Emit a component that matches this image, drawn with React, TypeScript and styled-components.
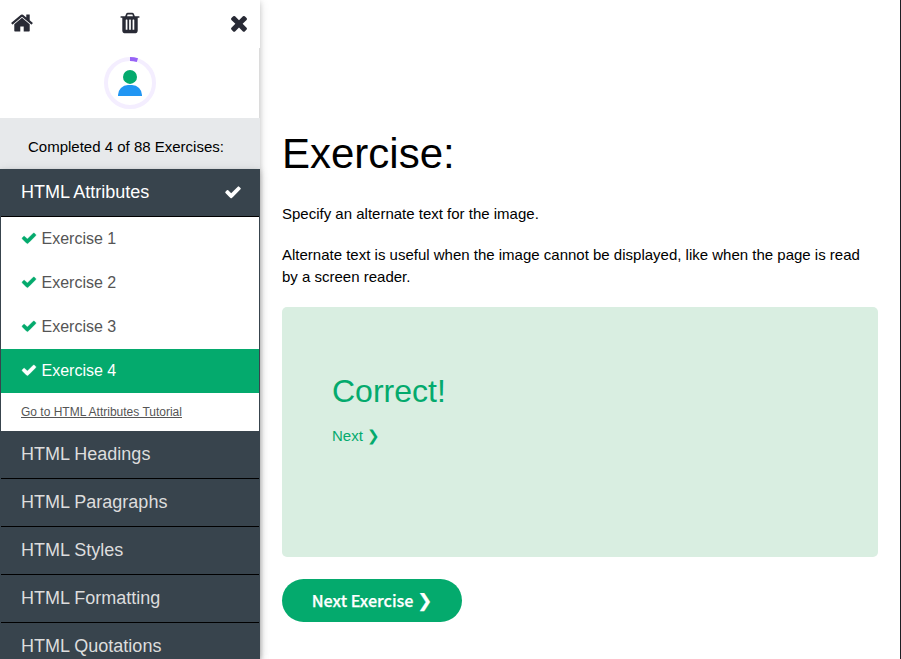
import React from "react";
import styled, { createGlobalStyle } from "styled-components";

const GlobalStyle = createGlobalStyle`
  * { box-sizing: border-box; }
  html, body { margin: 0; padding: 0; }
  body {
    font-family: "Liberation Sans", Arial, sans-serif;
    font-size: 15px;
    line-height: 22.5px;
    color: #000;
    background: #fff;
  }
`;

const paths = {
  home: "M1472 992v480q0 26-19 45t-45 19h-384v-384h-256v384h-384q-26 0-45-19t-19-45v-480q0-1 .5-3t.5-3l575-474 575 474q1 2 1 6zm223-69l-62 74q-8 9-21 11h-3q-13 0-21-7l-692-577-692 577q-12 8-24 7-13-2-21-11l-62-74q-8-10-7-23.5t11-21.5l719-599q32-26 76-26t76 26l244 204v-195q0-14 9-23t23-9h192q14 0 23 9t9 23v408l219 182q10 8 11 21.5t-7 23.5z",
  trash:
    "M704 1376v-704q0-14-9-23t-23-9h-64q-14 0-23 9t-9 23v704q0 14 9 23t23 9h64q14 0 23-9t9-23zm256 0v-704q0-14-9-23t-23-9h-64q-14 0-23 9t-9 23v704q0 14 9 23t23 9h64q14 0 23-9t9-23zm256 0v-704q0-14-9-23t-23-9h-64q-14 0-23 9t-9 23v704q0 14 9 23t23 9h64q14 0 23-9t9-23zm-544-992h448l-48-117q-7-9-17-11h-317q-10 2-17 11zm928 32v64q0 14-9 23t-23 9h-96v948q0 83-47 143.5t-113 60.5h-832q-66 0-113-58.5t-47-141.5v-952h-96q-14 0-23-9t-9-23v-64q0-14 9-23t23-9h309l70-167q15-37 54-63t79-26h320q40 0 79 26t54 63l70 167h309q14 0 23 9t9 23z",
  times:
    "M1490 1322q0 40-28 68l-136 136q-28 28-68 28t-68-28l-294-294-294 294q-28 28-68 28t-68-28l-136-136q-28-28-28-68t28-68l294-294-294-294q-28-28-28-68t28-68l136-136q28-28 68-28t68 28l294 294 294-294q28-28 68-28t68 28l136 136q28 28 28 68t-28 68l-294 294 294 294q28 28 28 68z",
  check:
    "M1671 566q0 40-28 68l-724 724-136 136q-28 28-68 28t-68-28l-136-136-362-362q-28-28-28-68t28-68l136-136q28-28 68-28t68 28l294 295 656-657q28-28 68-28t68 28l136 136q28 28 28 68z",
};

const Glyph = styled.svg`
  display: block;
  flex: none;
  fill: currentColor;
`;

function Icon({ name, size }: { name: keyof typeof paths; size: number }) {
  return (
    <Glyph width={size} height={size} viewBox="0 0 1792 1792" aria-hidden="true">
      <path d={paths[name]} />
    </Glyph>
  );
}

const Page = styled.div`
  display: flex;
  height: 659px;
  overflow: hidden;
  border-right: 1px solid #1d1e24;
`;

const Sidebar = styled.aside`
  position: relative;
  flex: none;
  display: flex;
  flex-direction: column;
  width: 260px;
  background: #fff;
  box-shadow: 0 2px 5px rgba(0, 0, 0, 0.16), 0 2px 10px rgba(0, 0, 0, 0.12);
`;

const Toolbar = styled.div`
  display: flex;
  justify-content: space-between;
  height: 48px;
  padding: 11px 9.5px 0 10px;
  color: #282a35;
`;

const ToolButton = styled.button`
  display: block;
  height: 24px;
  padding: 0;
  border: 0;
  background: none;
  color: inherit;
`;

const Profile = styled.div`
  display: flex;
  justify-content: center;
  height: 70px;
  padding-top: 9px;
  border-right: 1px solid #dcdcdc;

  svg {
    margin-left: 1px;
  }
`;

const Progress = styled.div`
  height: 51px;
  padding: 18px 0 0 28px;
  background: #e7e9eb;
`;

const Menu = styled.nav`
  flex: 1;
  min-height: 0;
  background: #38444d;
  border: solid #38444d;
  border-width: 0 1px;
  box-shadow: 0 2px 5px rgba(0, 0, 0, 0.16), 0 2px 10px rgba(0, 0, 0, 0.12);
`;

const Section = styled.div<{ $open?: boolean }>`
  display: flex;
  align-items: center;
  justify-content: space-between;
  height: 48px;
  padding: 0 17px 0 20px;
  border-bottom: 1px solid #000;
  color: ${(p) => (p.$open ? "#fff" : "#ddd")};
  font-size: 18px;
  line-height: 27px;

  svg {
    margin-bottom: 1px;
  }
`;

const Exercises = styled.div`
  height: 214px;
  background: #fff;
`;

const Exercise = styled.div<{ $active?: boolean }>`
  display: flex;
  align-items: center;
  gap: 4.5px;
  height: 44px;
  padding-left: 20px;
  background: ${(p) => (p.$active ? "#04aa6d" : "#fff")};
  color: ${(p) => (p.$active ? "#fff" : "#555")};
  font-size: 16px;
  line-height: 24px;

  svg {
    margin-bottom: 2px;
    color: ${(p) => (p.$active ? "#fff" : "#04aa6d")};
    stroke: currentColor;
    stroke-width: 40px;
  }
`;

const TutorialLink = styled.a`
  display: block;
  padding: 10px 20px;
  color: #555;
  font-size: 12px;
  line-height: 18px;
  text-decoration: underline;
`;

const Main = styled.main`
  flex: 1;
  min-width: 0;
  padding: 122px 22px 0;
`;

const Title = styled.h1`
  margin: 0 0 18px;
  font-size: 42px;
  line-height: 63px;
  font-weight: 400;
`;

const Text = styled.p`
  margin: 0 0 18px;
`;

const Result = styled.section`
  height: 250px;
  padding: 60px 50px 0;
  border-radius: 5px;
  background: #d9eee1;
  color: #04aa6d;
`;

const ResultTitle = styled.h2`
  margin: 0 0 10px;
  font-size: 32px;
  line-height: 48px;
  font-weight: 400;
`;

const NextLink = styled.a`
  display: block;
`;

const NextButton = styled.button`
  display: block;
  width: 180px;
  height: 43px;
  margin-top: 22px;
  padding: 0;
  border: 0;
  border-radius: 25px;
  background: #04aa6d;
  color: #fff;
  font-family: "Noto Sans CJK SC", sans-serif;
  font-size: 16.2px;
  font-weight: 500;
  line-height: 43px;
  -webkit-text-stroke: 0.25px #fff;
`;

const Chevron = styled.span`
  font-family: "DejaVu Sans", sans-serif;
  font-size: 18px;
  font-weight: 600;
  line-height: 1;
`;

const exercises = ["Exercise 1", "Exercise 2", "Exercise 3", "Exercise 4"];
const sections = ["HTML Headings", "HTML Paragraphs", "HTML Styles", "HTML Formatting", "HTML Quotations"];

export default function App() {
  return (
    <>
      <GlobalStyle />
      <Page>
        <Sidebar>
          <Toolbar>
            <ToolButton aria-label="Home"><Icon name="home" size={24} /></ToolButton>
            <ToolButton aria-label="Reset"><Icon name="trash" size={24} /></ToolButton>
            <ToolButton aria-label="Close"><Icon name="times" size={24} /></ToolButton>
          </Toolbar>
          <Profile>
            <svg width="52" height="52" viewBox="0 0 52 52">
              <circle cx="26" cy="26" r="24" fill="none" stroke="#f4eeff" strokeWidth="4" />
              <path d="M26 2A24 24 0 0 1 33.4 3.2" fill="none" stroke="#9763f6" strokeWidth="4" />
              <circle cx="26" cy="19.9" r="7" fill="#04aa6d" />
              <path d="M14 39v-1a10 10 0 0 1 10-10h4a10 10 0 0 1 10 10v1z" fill="#2196f3" />
            </svg>
          </Profile>
          <Progress>Completed 4 of 88 Exercises:</Progress>
          <Menu>
            <Section $open>
              HTML Attributes
              <Icon name="check" size={18} />
            </Section>
            <Exercises>
              {exercises.map((label, i) => (
                <Exercise key={label} $active={i === 3}>
                  <Icon name="check" size={16} />
                  {label}
                </Exercise>
              ))}
              <TutorialLink>Go to HTML Attributes Tutorial</TutorialLink>
            </Exercises>
            {sections.map((label) => (
              <Section key={label}>{label}</Section>
            ))}
          </Menu>
        </Sidebar>
        <Main>
          <Title>Exercise:</Title>
          <Text>Specify an alternate text for the image.</Text>
          <Text>
            Alternate text is useful when the image cannot be displayed, like when the page is read by a screen reader.
          </Text>
          <Result>
            <ResultTitle>Correct!</ResultTitle>
            <NextLink>Next ❯</NextLink>
          </Result>
          <NextButton>
            Next Exercise <Chevron>❯</Chevron>
          </NextButton>
        </Main>
      </Page>
    </>
  );
}
